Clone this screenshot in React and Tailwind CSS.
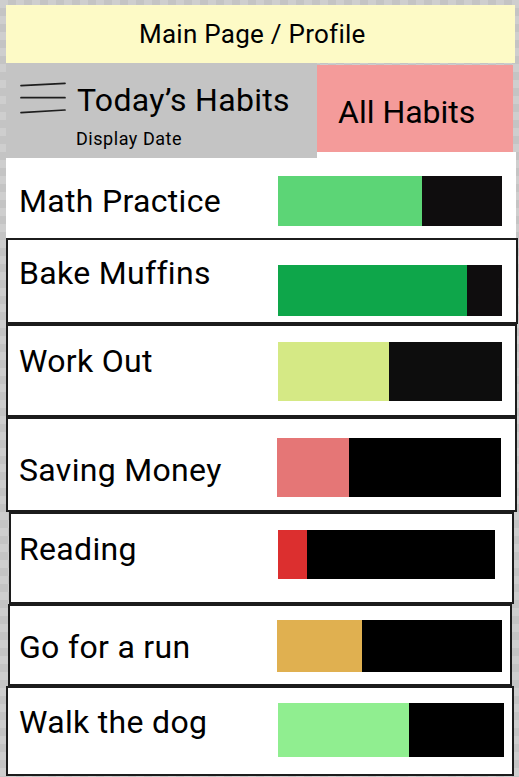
import React from "react";

const rows = [
  {
    name: "Math Practice",
    row: "ml-[6px] w-[510px] h-[86px]",
    label: "pl-[13px] pt-[30px]",
    bar: "mt-[24px] mr-[14px] w-[224px] h-[50px] bg-[#0f0d0e]",
    fill: 144,
    color: "#5cd576",
  },
  {
    name: "Bake Muffins",
    row: "ml-[6px] w-[512px] h-[86px] border-2 border-[#1c1c1c]",
    label: "pl-[11px] pt-[14px]",
    bar: "mt-[25px] mr-[14px] w-[224px] h-[51px] bg-[#0f0d0e]",
    fill: 189,
    color: "#0ea64a",
  },
  {
    name: "Work Out",
    row: "ml-[6px] w-[511px] h-[93px] border-2 border-[#1c1c1c]",
    label: "pl-[11px] pt-[16px]",
    bar: "mt-[16px] mr-[13px] w-[224px] h-[59px] bg-[#0d0d0d]",
    fill: 111,
    color: "#d5e985",
  },
  {
    name: "Saving Money",
    row: "ml-[6px] w-[511px] h-[95px] border-2 border-[#1c1c1c]",
    label: "pl-[11px] pt-[32px]",
    bar: "mt-[19px] mr-[14px] w-[224px] h-[59px] bg-black",
    fill: 72,
    color: "#e57676",
  },
  {
    name: "Reading",
    row: "ml-[9px] w-[505px] h-[92px] border-2 border-[#1c1c1c]",
    label: "pl-[8px] pt-[16px]",
    bar: "mt-[16px] mr-[17px] w-[217px] h-[49px] bg-black",
    fill: 29,
    color: "#dc2f2f",
  },
  {
    name: "Go for a run",
    row: "ml-[8px] w-[504px] h-[82px] border-2 border-[#1c1c1c]",
    label: "pl-[9px] pt-[22px]",
    bar: "mt-[14px] mr-[8px] w-[225px] h-[52px] bg-black",
    fill: 85,
    color: "#e0b050",
  },
  {
    name: "Walk the dog",
    row: "ml-[6px] w-[508px] h-[90px] border-2 border-[#1c1c1c]",
    label: "pl-[11px] pt-[15px]",
    bar: "mt-[15px] mr-[8px] w-[226px] h-[54px] bg-black",
    fill: 131,
    color: "#90ee90",
  },
];

function Hamburger() {
  return (
    <svg width="46" height="36" viewBox="0 0 46 36" className="shrink-0">
      <g stroke="#1e1e1e" strokeWidth="1.7" strokeLinecap="round" fill="none">
        <line x1="1" y1="5.7" x2="45" y2="3.3" />
        <line x1="1" y1="17.7" x2="45" y2="17.7" />
        <line x1="1" y1="32.7" x2="45" y2="30" />
      </g>
    </svg>
  );
}

export default function App() {
  return (
    <div
      className="w-[519px] h-[777px] overflow-hidden pt-[5px] bg-[image:repeating-conic-gradient(#c4c4c4_0%_25%,#cecece_0%_50%)] bg-[length:16px_16px] text-black"
      style={{ fontFamily: "Roboto, 'Noto Sans', sans-serif" }}
    >
      {/* Top yellow header */}
      <div className="ml-[6px] w-[509px] h-[58px] bg-[#fdfac6] flex items-center pl-[133px]">
        <span className="text-[26px] leading-[30px] tracking-[0.01em]">Main Page / Profile</span>
      </div>

      {/* Tabs */}
      <div className="flex items-start h-[89px] ml-[6px]">
        <div className="relative z-10 w-[311px] h-[95px] bg-[#c4c4c4] pl-[14px] pt-[17px]">
          <div className="flex items-start">
            <Hamburger />
            <span className="ml-[11px] mt-[2px] text-[32px] leading-[36px] tracking-[0.01em]">Today’s Habits</span>
          </div>
          <div className="ml-[56px] mt-[10px] text-[18px] leading-[22px] tracking-[0.03em]">Display Date</div>
        </div>
        <div className="mt-[2px] w-[196px] h-[87px] bg-[#f49b9a] pl-[21px] pt-[29px]">
          <span className="text-[32px] leading-[36px]">All Habits</span>
        </div>
      </div>

      {/* Habit rows */}
      {rows.map((r) => (
        <div key={r.name} className={`flex items-start bg-white box-border ${r.row}`}>
          <div className={`text-[32px] leading-[38px] tracking-[0.01em] ${r.label}`}>{r.name}</div>
          <div className={`ml-auto flex shrink-0 ${r.bar}`}>
            <div className="h-full" style={{ width: r.fill, backgroundColor: r.color }} />
          </div>
        </div>
      ))}
    </div>
  );
}
